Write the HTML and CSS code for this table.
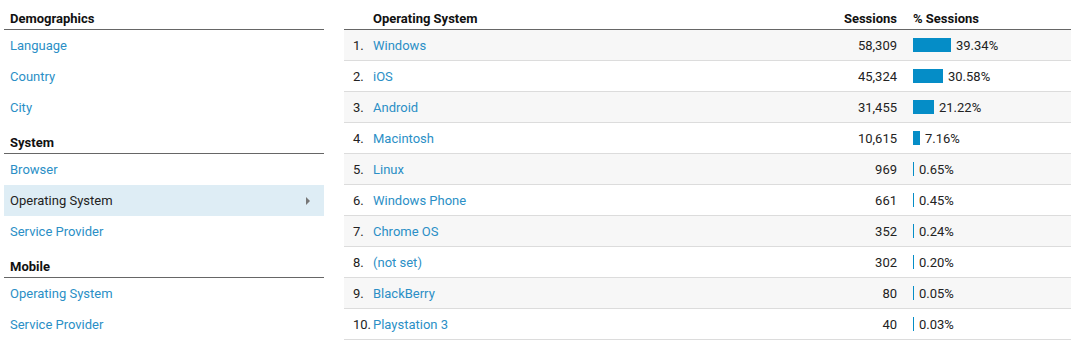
FILE: index.html
```html
<!DOCTYPE html>
<html>
<head>
<meta charset="utf-8">
<link rel="stylesheet" href="styles.css">
</head>
<body>
<div class="page">
  <nav class="nav">
    <div class="nav-head first">Demographics</div>
    <a class="nav-item">Language</a>
    <a class="nav-item">Country</a>
    <a class="nav-item">City</a>
    <div class="nav-head">System</div>
    <a class="nav-item">Browser</a>
    <a class="nav-item active">Operating System<span class="arrow"></span></a>
    <a class="nav-item">Service Provider</a>
    <div class="nav-head">Mobile</div>
    <a class="nav-item">Operating System</a>
    <a class="nav-item">Service Provider</a>
  </nav>
  <div class="table">
    <div class="row head">
      <span class="rank"></span>
      <span class="name">Operating System</span>
      <span class="sessions">Sessions</span>
      <span class="pct">% Sessions</span>
    </div>
    <div class="row"><span class="rank">1.</span><a class="name">Windows</a><span class="sessions">58,309</span><span class="pct"><i class="bar" style="width:38px"></i>39.34%</span></div>
    <div class="row"><span class="rank">2.</span><a class="name">iOS</a><span class="sessions">45,324</span><span class="pct"><i class="bar" style="width:30px"></i>30.58%</span></div>
    <div class="row"><span class="rank">3.</span><a class="name">Android</a><span class="sessions">31,455</span><span class="pct"><i class="bar" style="width:21px"></i>21.22%</span></div>
    <div class="row"><span class="rank">4.</span><a class="name">Macintosh</a><span class="sessions">10,615</span><span class="pct"><i class="bar" style="width:7px"></i>7.16%</span></div>
    <div class="row"><span class="rank">5.</span><a class="name">Linux</a><span class="sessions">969</span><span class="pct"><i class="bar" style="width:1px"></i>0.65%</span></div>
    <div class="row"><span class="rank">6.</span><a class="name">Windows Phone</a><span class="sessions">661</span><span class="pct"><i class="bar" style="width:1px"></i>0.45%</span></div>
    <div class="row"><span class="rank">7.</span><a class="name">Chrome OS</a><span class="sessions">352</span><span class="pct"><i class="bar" style="width:1px"></i>0.24%</span></div>
    <div class="row"><span class="rank">8.</span><a class="name">(not set)</a><span class="sessions">302</span><span class="pct"><i class="bar" style="width:1px"></i>0.20%</span></div>
    <div class="row"><span class="rank">9.</span><a class="name">BlackBerry</a><span class="sessions">80</span><span class="pct"><i class="bar" style="width:1px"></i>0.05%</span></div>
    <div class="row"><span class="rank">10.</span><a class="name">Playstation 3</a><span class="sessions">40</span><span class="pct"><i class="bar" style="width:1px"></i>0.03%</span></div>
  </div>
</div>
</body>
</html>
```
FILE: styles.css
```css
html, body {
  margin: 0;
  padding: 0;
  background: #fff;
}
body {
  font-family: Roboto, "Liberation Sans", Arial, sans-serif;
  font-size: 13px;
  color: #222;
}
.page {
  display: flex;
  padding-left: 4px;
  gap: 20px;
  width: 1067px;
}
.nav {
  width: 320px;
  display: flex;
  flex-direction: column;
}
.nav-head {
  padding: 12px 6px 2px;
  line-height: 16px;
  font-weight: 700;
  color: #111;
  border-bottom: 1px solid #666;
}
.nav-head.first {
  padding-top: 11px;
}
.nav-item {
  height: 31px;
  line-height: 31px;
  padding: 0 6px;
  color: #2b8fc6;
  display: flex;
  align-items: center;
  justify-content: space-between;
}
.nav-item.active {
  background: #deedf5;
  color: #222;
}
.arrow {
  width: 0;
  height: 0;
  border-top: 4px solid transparent;
  border-bottom: 4px solid transparent;
  border-left: 4px solid #777;
  margin-right: 8px;
}
.table {
  flex: 1;
  display: flex;
  flex-direction: column;
}
.row {
  display: grid;
  grid-template-columns: 20px 1fr 100px 174px;
  height: 30px;
  align-items: center;
  padding-left: 9px;
  border-bottom: 1px solid #dcdcdc;
}
.row:nth-child(even) {
  background: #f7f7f7;
}
.row.head {
  height: 22px;
  padding-top: 7px;
  font-weight: 700;
  color: #111;
  border-bottom: 1px solid #666;
  background: #fff;
}
.name {
  color: #2b8fc6;
}
.head .name {
  color: #111;
}
.sessions {
  text-align: right;
}
.pct {
  display: flex;
  align-items: center;
  padding-left: 16px;
}
.bar {
  display: block;
  height: 14px;
  background: #058dc7;
  margin-right: 5px;
}
```
